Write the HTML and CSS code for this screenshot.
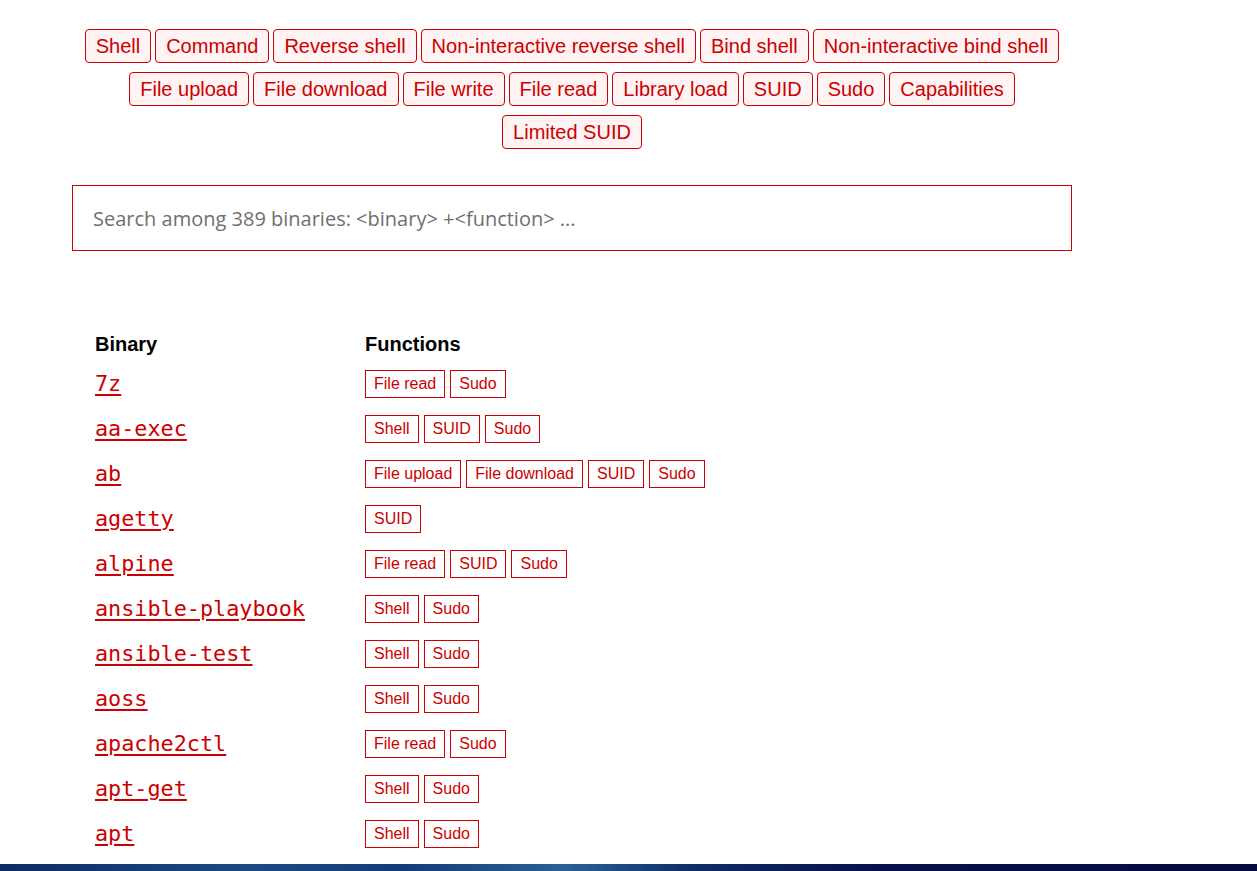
FILE: index.html
```html
<!DOCTYPE html>
<html lang="en">
<head>
    <meta charset="UTF-8">
    <meta name="viewport" content="width=device-width, initial-scale=1.0">
    <title>GTFOBins</title>
    <link rel="stylesheet" href="styles.css">
</head>
<body>
    <div class="page">
        <div class="filters">
            <a class="filter" href="#">Shell</a>
            <a class="filter" href="#">Command</a>
            <a class="filter" href="#">Reverse shell</a>
            <a class="filter" href="#">Non-interactive reverse shell</a>
            <a class="filter" href="#">Bind shell</a>
            <a class="filter" href="#">Non-interactive bind shell</a>
            <a class="filter" href="#">File upload</a>
            <a class="filter" href="#">File download</a>
            <a class="filter" href="#">File write</a>
            <a class="filter" href="#">File read</a>
            <a class="filter" href="#">Library load</a>
            <a class="filter" href="#">SUID</a>
            <a class="filter" href="#">Sudo</a>
            <a class="filter" href="#">Capabilities</a>
            <a class="filter" href="#">Limited SUID</a>
        </div>

        <input class="search" type="text" placeholder="Search among 389 binaries: &lt;binary&gt; +&lt;function&gt; ...">

        <div class="list">
            <div class="row head">
                <div class="bin">Binary</div>
                <div>Functions</div>
            </div>
            <div class="row">
                <div class="bin"><a href="#">7z</a></div>
                <div class="tags"><a href="#">File read</a><a href="#">Sudo</a></div>
            </div>
            <div class="row">
                <div class="bin"><a href="#">aa-exec</a></div>
                <div class="tags"><a href="#">Shell</a><a href="#">SUID</a><a href="#">Sudo</a></div>
            </div>
            <div class="row">
                <div class="bin"><a href="#">ab</a></div>
                <div class="tags"><a href="#">File upload</a><a href="#">File download</a><a href="#">SUID</a><a href="#">Sudo</a></div>
            </div>
            <div class="row">
                <div class="bin"><a href="#">agetty</a></div>
                <div class="tags"><a href="#">SUID</a></div>
            </div>
            <div class="row">
                <div class="bin"><a href="#">alpine</a></div>
                <div class="tags"><a href="#">File read</a><a href="#">SUID</a><a href="#">Sudo</a></div>
            </div>
            <div class="row">
                <div class="bin"><a href="#">ansible-playbook</a></div>
                <div class="tags"><a href="#">Shell</a><a href="#">Sudo</a></div>
            </div>
            <div class="row">
                <div class="bin"><a href="#">ansible-test</a></div>
                <div class="tags"><a href="#">Shell</a><a href="#">Sudo</a></div>
            </div>
            <div class="row">
                <div class="bin"><a href="#">aoss</a></div>
                <div class="tags"><a href="#">Shell</a><a href="#">Sudo</a></div>
            </div>
            <div class="row">
                <div class="bin"><a href="#">apache2ctl</a></div>
                <div class="tags"><a href="#">File read</a><a href="#">Sudo</a></div>
            </div>
            <div class="row">
                <div class="bin"><a href="#">apt-get</a></div>
                <div class="tags"><a href="#">Shell</a><a href="#">Sudo</a></div>
            </div>
            <div class="row">
                <div class="bin"><a href="#">apt</a></div>
                <div class="tags"><a href="#">Shell</a><a href="#">Sudo</a></div>
            </div>
            <div class="row">
                <div class="bin"><a href="#">ar</a></div>
                <div class="tags"><a href="#">File read</a><a href="#">SUID</a><a href="#">Sudo</a></div>
            </div>
        </div>
    </div>

    <div class="taskbar"></div>
</body>
</html>
```

FILE: styles.css
```css
body {
    margin: 0;
    padding: 0;
    background: #fff;
    font-family: "Liberation Sans", Arial, sans-serif;
}

.page {
    width: 1000px;
    margin-left: 72px;
    padding-top: 29px;
}

.filters {
    display: flex;
    flex-wrap: wrap;
    justify-content: center;
    gap: 9px 4px;
    padding: 0 12px;
}

.filter {
    display: block;
    padding: 5px 10px;
    font-size: 20px;
    line-height: 22px;
    color: #c00;
    text-decoration: none;
    background-color: #fff3f3;
    border: 1px solid #c00;
    border-radius: 4px;
}

.search {
    display: block;
    box-sizing: border-box;
    width: 1000px;
    height: 66px;
    margin-top: 36px;
    padding: 0 20px;
    border: 1px solid #c00;
    border-radius: 0;
    outline: none;
    font-family: "Open Sans", sans-serif;
    font-size: 20px;
    color: #333;
}

.search::placeholder {
    color: #6f6f6f;
}

.list {
    margin-top: 81px;
    padding-left: 23px;
}

.row {
    display: flex;
    align-items: center;
    height: 45px;
}

.row.head {
    height: 29px;
    align-items: flex-start;
    font-size: 20px;
    line-height: 24px;
    font-weight: bold;
    color: #000;
}

.bin {
    width: 270px;
}

.bin a {
    font-family: "DejaVu Sans Mono", monospace;
    font-size: 21.8px;
    color: #c00;
    text-decoration: underline;
    text-decoration-thickness: 2px;
    text-underline-offset: 3px;
}

.tags {
    display: flex;
    gap: 5px;
}

.tags a {
    display: block;
    padding: 4px 8px;
    font-size: 16px;
    line-height: 18px;
    color: #c00;
    text-decoration: none;
    border: 1px solid #c00;
}

.taskbar {
    position: fixed;
    left: 0;
    right: 0;
    bottom: 0;
    height: 7px;
    background: linear-gradient(100deg, #0d2a63 0%, #1c4a85 20%, #143a78 32%, #2a6198 45%, #0f2c66 55%, #07104a 70%, #060a40 100%);
}
```
